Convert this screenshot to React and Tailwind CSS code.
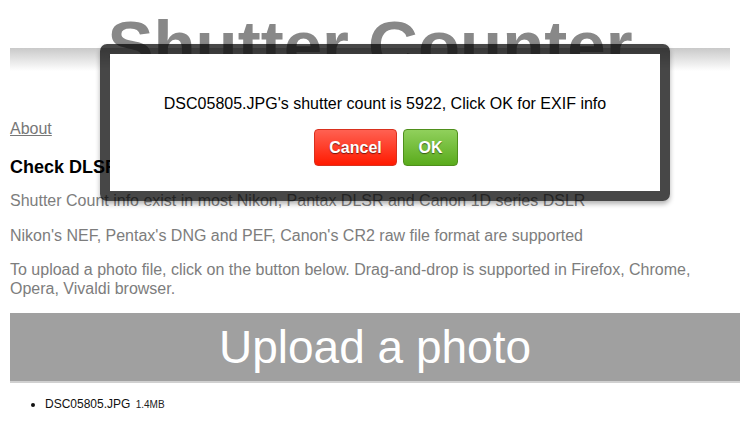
export default function App() {
  return (
    <div className="relative min-h-[423px] bg-white pl-[10px] font-['Liberation_Sans',Arial,sans-serif] overflow-hidden">
      <header className="mr-[10px] h-[91px] bg-[linear-gradient(to_bottom,transparent_0px,transparent_48px,#c9c9c9_48px,#ffffff_71px,#ffffff_100%)]">
        <h1 className="text-center text-[69px] leading-[91px] font-bold text-[#888888] whitespace-nowrap">
          Shutter Counter
        </h1>
      </header>

      <a href="#" className="mt-[29px] block w-fit text-[16px] leading-[18.4px] text-[#777777] underline">
        About
      </a>

      <h3 className="mt-[19px] mb-[14px] text-[18px] leading-[21px] font-bold text-black">
        Check DLSR Shutter Count
      </h3>

      <div className="text-[16px] leading-[18.4px] text-[#7d7d7d]">
        <p className="mb-[16px]">
          Shutter Count info exist in most Nikon, Pantax DLSR and Canon 1D series DSLR
        </p>
        <p className="mb-[16px]">
          Nikon's NEF, Pentax's DNG and PEF, Canon's CR2 raw file format are supported
        </p>
        <p className="pr-[10px]">
          To upload a photo file, click on the button below. Drag-and-drop is supported in Firefox, Chrome, Opera, Vivaldi browser.
        </p>
      </div>

      <div className="mt-[15px] flex h-[70px] items-center justify-center border-b-2 border-[#d0d0d0] bg-[#a0a0a0]">
        <span className="text-[46px] leading-[53px] text-white">Upload a photo</span>
      </div>

      <ul className="mt-[14px] list-disc pl-[35px] text-[12px] leading-[14px] text-[#111111]">
        <li>
          DSC05805.JPG <span className="ml-[2px] text-[10px] text-[#222222]">1.4MB</span>
        </li>
      </ul>

      <div className="absolute left-[100px] top-[44px] w-[570px] rounded-[7px] border-[10px] border-[rgba(0,0,0,0.72)] bg-clip-padding shadow-[0_3px_5px_rgba(0,0,0,0.3)]">
        <div className="flex flex-col items-center bg-white pt-[41px] pb-[25px]">
          <p className="text-[16px] leading-[18.4px] text-black">
            DSC05805.JPG's shutter count is 5922, Click OK for EXIF info
          </p>
          <div className="mt-[16px] flex gap-[6px] pl-[2px]">
            <button className="flex h-[37px] w-[83px] items-center justify-center rounded-[4px] border border-[#d9301e] bg-[linear-gradient(to_bottom,#ff6152,#ff1a00)] text-[16px] font-bold text-white [text-shadow:0_1px_1px_rgba(0,0,0,0.55)]">
              Cancel
            </button>
            <button className="flex h-[37px] w-[55px] items-center justify-center rounded-[4px] border border-[#4f8f1c] bg-[linear-gradient(to_bottom,#90d05c,#5aab1c)] text-[16px] font-bold text-white [text-shadow:0_1px_1px_rgba(0,0,0,0.5)]">
              OK
            </button>
          </div>
        </div>
      </div>
    </div>
  );
}
